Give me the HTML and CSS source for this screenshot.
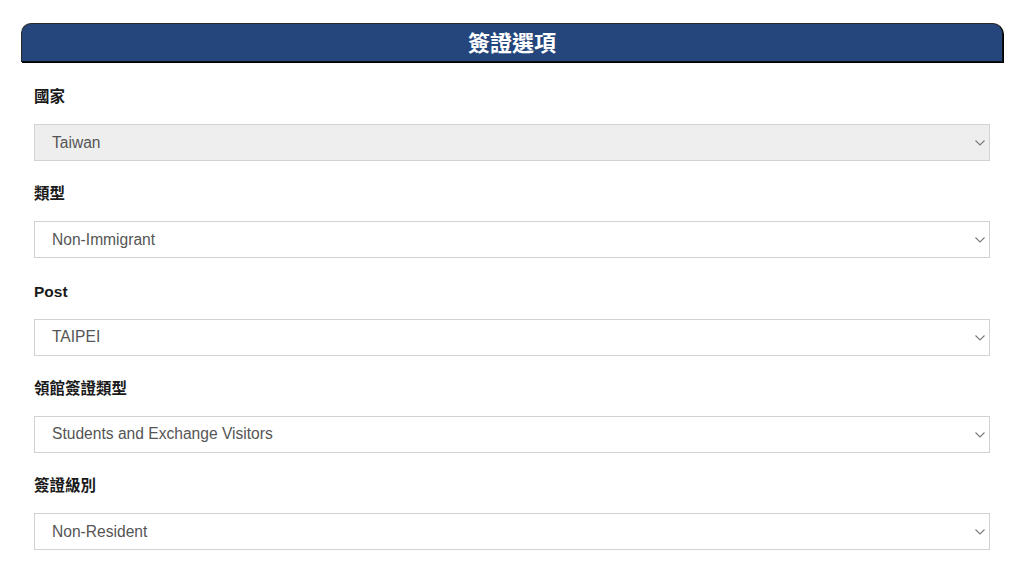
FILE: index.html
```html
<!DOCTYPE html>
<html lang="zh-Hant">
<head>
<meta charset="utf-8">
<title>簽證選項</title>
<link rel="stylesheet" href="styles.css">
</head>
<body>
<div class="page">
  <h2 class="panel-title">簽證選項</h2>
  <div class="form">
    <div class="field">
      <label class="field-label">國家</label>
      <div class="select select-disabled"><span class="select-value">Taiwan</span><svg class="chevron" width="10" height="6" viewBox="0 0 10 6"><path d="M0.5 0.5 L5 5 L9.5 0.5" fill="none" stroke="#7a7a7a" stroke-width="1.1"/></svg></div>
    </div>
    <div class="field">
      <label class="field-label">類型</label>
      <div class="select"><span class="select-value">Non-Immigrant</span><svg class="chevron" width="10" height="6" viewBox="0 0 10 6"><path d="M0.5 0.5 L5 5 L9.5 0.5" fill="none" stroke="#7a7a7a" stroke-width="1.1"/></svg></div>
    </div>
    <div class="field">
      <label class="field-label">Post</label>
      <div class="select"><span class="select-value">TAIPEI</span><svg class="chevron" width="10" height="6" viewBox="0 0 10 6"><path d="M0.5 0.5 L5 5 L9.5 0.5" fill="none" stroke="#7a7a7a" stroke-width="1.1"/></svg></div>
    </div>
    <div class="field">
      <label class="field-label">領館簽證類型</label>
      <div class="select"><span class="select-value">Students and Exchange Visitors</span><svg class="chevron" width="10" height="6" viewBox="0 0 10 6"><path d="M0.5 0.5 L5 5 L9.5 0.5" fill="none" stroke="#7a7a7a" stroke-width="1.1"/></svg></div>
    </div>
    <div class="field">
      <label class="field-label">簽證級別</label>
      <div class="select"><span class="select-value">Non-Resident</span><svg class="chevron" width="10" height="6" viewBox="0 0 10 6"><path d="M0.5 0.5 L5 5 L9.5 0.5" fill="none" stroke="#7a7a7a" stroke-width="1.1"/></svg></div>
    </div>
  </div>
</div>
</body>
</html>
```
FILE: styles.css
```css
html, body {
  margin: 0;
  padding: 0;
  background: #ffffff;
}
body {
  font-family: "Liberation Sans", Arial, "Noto Sans CJK TC", sans-serif;
  color: #222;
}
.page {
  padding: 23px 21px 0 21px;
}
.panel-title {
  margin: 0;
  height: 37px;
  background: #25467c;
  border: 1px solid #2b2b2b;
  border-bottom-color: #111;
  border-right-color: #111;
  box-shadow: 1px 1px 0 #000;
  border-radius: 10px 10px 0 0;
  color: #ffffff;
  font-family: "Noto Sans CJK TC", "Liberation Sans", sans-serif;
  font-size: 22px;
  font-weight: 700;
  line-height: 35px;
  text-align: center;
}
.form {
  padding: 25px 13px 0 13px;
  display: flex;
  flex-direction: column;
  gap: 23.3px;
}
.field {
  display: flex;
  flex-direction: column;
  gap: 17px;
}
.field-label {
  display: block;
  height: 20px;
  line-height: 20px;
  font-size: 15.5px;
  font-weight: 700;
  color: #1a1a1a;
  font-family: "Liberation Sans", Arial, "Noto Sans CJK TC", sans-serif;
}
.select {
  box-sizing: border-box;
  height: 37px;
  border: 1px solid #d2d2d2;
  background: #ffffff;
  display: flex;
  align-items: center;
  justify-content: space-between;
  padding: 0 4px 0 17px;
}
.select-disabled {
  background: #eeeeee;
}
.select-value {
  font-size: 15.6px;
  color: #555555;
}
.chevron {
  display: block;
  margin-top: 1px;
}
```
